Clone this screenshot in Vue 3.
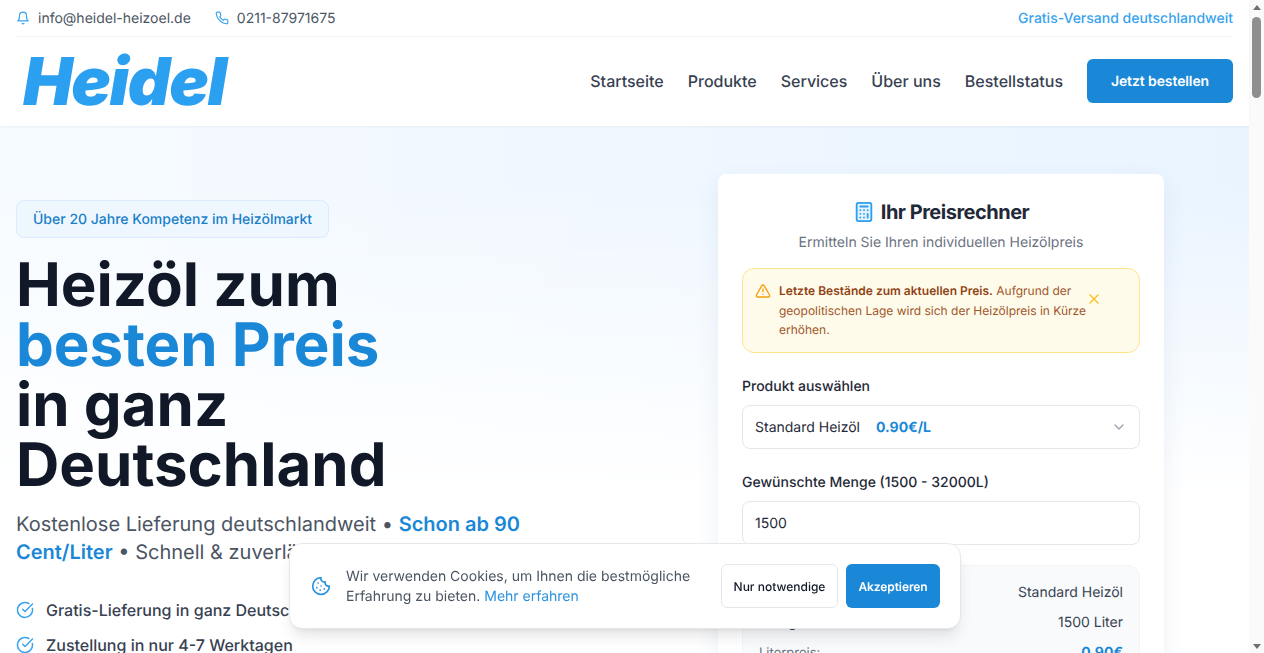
<script setup>
const benefits = ['Gratis-Lieferung in ganz Deutschland', 'Zustellung in nur 4-7 Werktagen']
const navItems = ['Startseite', 'Produkte', 'Services', 'Über uns', 'Bestellstatus']
</script>

<template>
  <div class="page">
    <div class="content">
      <header class="header">
        <div class="topbar">
          <div class="contact">
            <span class="contact-item">
              <svg class="top-icon" viewBox="0 0 24 24" fill="none" stroke="currentColor" stroke-width="2" stroke-linecap="round" stroke-linejoin="round"><path d="M6 8a6 6 0 0 1 12 0c0 7 3 9 3 9H3s3-2 3-9"/><path d="M10.3 21a1.94 1.94 0 0 0 3.4 0"/></svg>
              info@heidel-heizoel.de
            </span>
            <span class="contact-item">
              <svg class="top-icon" viewBox="0 0 24 24" fill="none" stroke="currentColor" stroke-width="2" stroke-linecap="round" stroke-linejoin="round"><path d="M22 16.92v3a2 2 0 0 1-2.18 2 19.79 19.79 0 0 1-8.63-3.07 19.5 19.5 0 0 1-6-6 19.79 19.79 0 0 1-3.07-8.67A2 2 0 0 1 4.11 2h3a2 2 0 0 1 2 1.72 12.84 12.84 0 0 0 .7 2.81 2 2 0 0 1-.45 2.11L8.09 9.91a16 16 0 0 0 6 6l1.27-1.27a2 2 0 0 1 2.11-.45 12.84 12.84 0 0 0 2.81.7A2 2 0 0 1 22 16.92z"/></svg>
              0211-87971675
            </span>
          </div>
          <span class="shipping">Gratis-Versand deutschlandweit</span>
        </div>
        <div class="mainbar">
          <div class="logo">Heidel</div>
          <nav class="nav">
            <a v-for="item in navItems" :key="item" class="nav-link">{{ item }}</a>
            <button class="order-button">Jetzt bestellen</button>
          </nav>
        </div>
      </header>

      <section class="hero">
        <div class="hero-left">
          <div class="badge">Über 20 Jahre Kompetenz im Heizölmarkt</div>
          <h1 class="headline">Heizöl zum<br><span class="blue">besten Preis</span><br>in ganz<br>Deutschland</h1>
          <p class="lead">Kostenlose Lieferung deutschlandweit • <strong class="blue">Schon ab 90 Cent/Liter</strong> • Schnell &amp; zuverlässig</p>
          <ul class="benefits">
            <li v-for="b in benefits" :key="b" class="benefit">
              <svg class="check" viewBox="0 0 24 24" fill="none" stroke="currentColor" stroke-width="2" stroke-linecap="round" stroke-linejoin="round"><path d="M21.8 10A10 10 0 1 1 17 3.34"/><path d="m9 11 3 3L22 4"/></svg>
              {{ b }}
            </li>
          </ul>
        </div>

        <div class="card">
          <h2 class="card-title">
            <svg class="calc" viewBox="0 0 24 24" fill="#e3f2fd" stroke="currentColor" stroke-width="2" stroke-linecap="round" stroke-linejoin="round"><rect x="4" y="2" width="16" height="20" rx="2"/><line x1="8" x2="16" y1="6" y2="6"/><path d="M16 14v4M16 10h.01M12 10h.01M8 10h.01M12 14h.01M8 14h.01M12 18h.01M8 18h.01"/></svg>
            Ihr Preisrechner
          </h2>
          <p class="card-sub">Ermitteln Sie Ihren individuellen Heizölpreis</p>

          <div class="alert">
            <svg class="alert-icon" viewBox="0 0 24 24" fill="none" stroke="currentColor" stroke-width="2" stroke-linecap="round" stroke-linejoin="round"><path d="m21.73 18-8-14a2 2 0 0 0-3.48 0l-8 14A2 2 0 0 0 4 21h16a2 2 0 0 0 1.73-3"/><path d="M12 9v4"/><path d="M12 17h.01"/></svg>
            <p class="alert-text"><strong>Letzte Bestände zum aktuellen Preis.</strong> Aufgrund der geopolitischen Lage wird sich der Heizölpreis in Kürze erhöhen.</p>
            <svg class="alert-close" viewBox="0 0 24 24" fill="none" stroke="currentColor" stroke-width="2" stroke-linecap="round" stroke-linejoin="round"><path d="M18 6 6 18"/><path d="m6 6 12 12"/></svg>
          </div>

          <label class="field-label">Produkt auswählen</label>
          <div class="field select">
            <span>Standard Heizöl</span>
            <b class="price">0.90€/L</b>
            <svg class="chevron" viewBox="0 0 24 24" fill="none" stroke="currentColor" stroke-width="2" stroke-linecap="round" stroke-linejoin="round"><path d="m6 9 6 6 6-6"/></svg>
          </div>

          <label class="field-label">Gewünschte Menge (1500 - 32000L)</label>
          <div class="field">1500</div>

          <div class="summary">
            <div class="row"><span>Produkt:</span><span>Standard Heizöl</span></div>
            <div class="row"><span>Menge:</span><span>1500 Liter</span></div>
            <div class="row small"><span>Literpreis:</span><b class="price">0.90€</b></div>
          </div>
        </div>
      </section>
    </div>

    <div class="scrollbar">
      <span class="arrow up"></span>
      <span class="thumb"></span>
      <span class="arrow down"></span>
    </div>

    <div class="cookie">
      <svg class="cookie-icon" viewBox="0 0 24 24" fill="none" stroke="currentColor" stroke-width="2" stroke-linecap="round" stroke-linejoin="round"><path d="M12 2a10 10 0 1 0 10 10 4 4 0 0 1-5-5 4 4 0 0 1-5-5"/><path d="M8.5 8.5v.01"/><path d="M16 15.5v.01"/><path d="M12 12v.01"/><path d="M11 17v.01"/><path d="M7 14v.01"/></svg>
      <p class="cookie-text">Wir verwenden Cookies, um Ihnen die bestmögliche Erfahrung zu bieten. <a class="cookie-link">Mehr erfahren</a></p>
      <button class="cookie-btn ghost">Nur notwendige</button>
      <button class="cookie-btn solid">Akzeptieren</button>
    </div>
  </div>
</template>

<style>
html, body {
  margin: 0;
  height: 100%;
  overflow: hidden;
}
</style>

<style scoped>
.page {
  display: flex;
  height: 653px;
  overflow: hidden;
  font-family: Inter, "Liberation Sans", sans-serif;
  text-rendering: geometricPrecision;
  background: #fff;
}

.content {
  flex: 1;
  min-width: 0;
}

.scrollbar {
  width: 15px;
  background: #fafafa;
  display: flex;
  flex-direction: column;
  align-items: center;
}

.thumb {
  width: 9px;
  height: 81px;
  margin-top: 7px;
  border-radius: 5px;
  background: #8f8f8f;
}

.arrow {
  width: 0;
  height: 0;
  border-left: 4px solid transparent;
  border-right: 4px solid transparent;
}

.arrow.up {
  margin-top: 5px;
  border-bottom: 5px solid #6f6f6f;
}

.arrow.down {
  margin-top: auto;
  margin-bottom: 4px;
  border-top: 5px solid #6f6f6f;
}

.header {
  position: relative;
  height: 126px;
  padding: 0 16px;
  box-sizing: border-box;
  background: #fff;
  box-shadow: 0 1px 2px rgba(0, 0, 0, 0.05);
}

.topbar {
  display: flex;
  justify-content: space-between;
  align-items: center;
  height: 37px;
  box-sizing: border-box;
  border-bottom: 1px solid #f3f4f6;
  font-size: 14px;
  color: #4b5563;
}

.contact {
  display: flex;
  gap: 24px;
}

.contact-item {
  display: flex;
  align-items: center;
  gap: 8px;
}

.top-icon {
  width: 14px;
  height: 14px;
  color: #38a3ee;
}

.shipping {
  color: #38a3ee;
  font-weight: 500;
}

.mainbar {
  display: flex;
  justify-content: space-between;
  align-items: center;
  height: 88px;
}

.logo {
  margin-left: 7px;
  font-size: 66px;
  line-height: 1;
  font-weight: 900;
  font-style: italic;
  letter-spacing: -1.3px;
  color: #2b9ff0;
}

.nav {
  display: flex;
  align-items: center;
  gap: 24px;
}

.nav-link {
  font-size: 16px;
  font-weight: 500;
  color: #374151;
}

.order-button {
  width: 146px;
  height: 44px;
  border: 0;
  border-radius: 6px;
  background: #1a88d6;
  color: #fff;
  font: 600 14px Inter, sans-serif;
  letter-spacing: -0.1px;
  text-rendering: geometricPrecision;
}

.hero {
  display: grid;
  grid-template-columns: 1fr 446px;
  gap: 32px;
  height: 527px;
  padding: 48px 85px 0 16px;
  box-sizing: border-box;
  background:
    linear-gradient(to bottom, rgba(255, 255, 255, 0) 10%, #fff 70%),
    linear-gradient(to right, #f6fbff, #e9f4ff);
}

.hero-left {
  padding-top: 26px;
}

.badge {
  display: inline-block;
  padding: 1px 16px 0;
  line-height: 35px;
  border: 1px solid #dbeafe;
  border-radius: 8px;
  background: #eff7fe;
  color: #1a7fc9;
  font-size: 14px;
  font-weight: 500;
}

.headline {
  margin: 17px 0 0;
  font-size: 60px;
  line-height: 60px;
  font-weight: 700;
  color: #111827;
}

.blue {
  color: #1a88d6;
}

.lead {
  width: 530px;
  margin: 15px 0 0;
  font-size: 20px;
  line-height: 28px;
  color: #4b5563;
}

.lead strong {
  font-weight: 600;
}

.benefits {
  margin: 32px 0 0;
  padding: 0;
  list-style: none;
}

.benefit {
  display: flex;
  align-items: center;
  gap: 12px;
  margin-bottom: 11px;
  font-size: 16px;
  line-height: 24px;
  font-weight: 500;
  color: #374151;
}

.check {
  width: 18px;
  height: 18px;
  color: #38a3ee;
}

.card {
  align-self: start;
  height: 560px;
  padding: 24px;
  box-sizing: border-box;
  border-radius: 8px;
  background: #fff;
  box-shadow: 0 10px 25px rgba(40, 80, 130, 0.08);
}

.card-title {
  display: flex;
  justify-content: center;
  align-items: center;
  gap: 6px;
  margin: 0;
  font-size: 20px;
  line-height: 28px;
  font-weight: 700;
  letter-spacing: -0.5px;
  color: #1f2937;
}

.calc {
  width: 22px;
  height: 22px;
  color: #2b9ff0;
}

.card-sub {
  margin: 7px 0 0;
  text-align: center;
  font-size: 14px;
  line-height: 20px;
  color: #6b7280;
}

.alert {
  display: flex;
  align-items: flex-start;
  margin-top: 15px;
  padding: 12px;
  box-sizing: border-box;
  height: 85px;
  border: 1px solid #fde68a;
  border-radius: 12px;
  background: #fffbeb;
}

.alert-icon {
  flex: none;
  width: 16px;
  height: 16px;
  margin: 2px 8px 0 0;
  color: #f59e0b;
}

.alert-text {
  flex: none;
  width: 308px;
  margin: 0;
  font-size: 12px;
  line-height: 19.5px;
  color: #a0562a;
}

.alert-text strong {
  font-weight: 600;
  color: #8f4315;
}

.alert-close {
  flex: none;
  width: 16px;
  height: 16px;
  margin: 10px 0 0 -1px;
  color: #fbbf24;
}

.field-label {
  display: block;
  margin: 24px 0 8px;
  font-size: 14px;
  line-height: 20px;
  font-weight: 500;
  color: #1f2937;
}

.field {
  display: flex;
  align-items: center;
  height: 44px;
  padding: 0 12px;
  box-sizing: border-box;
  border: 1px solid #e5e7eb;
  border-radius: 8px;
  font-size: 14px;
  color: #1f2937;
}

.select span {
  margin-right: 16px;
}

.price {
  color: #1a88d6;
  font-weight: 700;
}

.chevron {
  width: 16px;
  height: 16px;
  margin-left: auto;
  color: #9ca3af;
}

.summary {
  margin-top: 20px;
  padding: 17px 16px;
  border-radius: 12px;
  background: #f9fafb;
  border: 1px solid #f3f4f6;
}

.row {
  display: flex;
  justify-content: space-between;
  height: 30px;
  font-size: 14px;
  line-height: 20px;
  color: #374151;
}

.row.small {
  font-size: 13px;
  color: #6b7280;
}

.row.small .price {
  font-size: 14px;
}

.cookie {
  position: fixed;
  left: 289px;
  top: 543px;
  display: flex;
  align-items: center;
  box-sizing: border-box;
  width: 672px;
  height: 86px;
  padding: 0 20px 0 21px;
  border: 1px solid #e5e7eb;
  border-radius: 13px;
  background: #fff;
  box-shadow: 0 10px 15px -3px rgba(0, 0, 0, 0.1), 0 4px 6px -4px rgba(0, 0, 0, 0.1);
}

.cookie-icon {
  flex: none;
  width: 20px;
  height: 20px;
  color: #2b93dd;
}

.cookie-text {
  flex: none;
  width: 360px;
  margin: 2px 15px 0;
  font-size: 14px;
  line-height: 20px;
  color: #4b5563;
}

.cookie-link {
  color: #2b93dd;
}

.cookie-btn {
  flex: none;
  height: 44px;
  border-radius: 6px;
  font: 500 12px Inter, sans-serif;
  text-rendering: geometricPrecision;
}

.cookie-btn.ghost {
  width: 117px;
  border: 1px solid #e5e7eb;
  background: #fff;
  color: #111827;
}

.cookie-btn.solid {
  width: 94px;
  margin-left: 8px;
  border: 0;
  background: #1a88d6;
  color: #fff;
  font-weight: 600;
  letter-spacing: -0.1px;
}
</style>
